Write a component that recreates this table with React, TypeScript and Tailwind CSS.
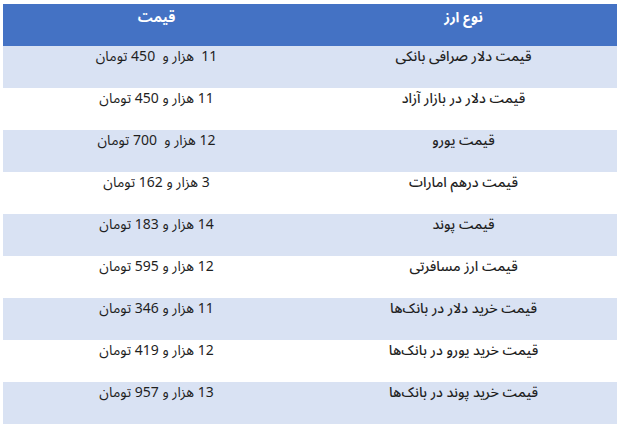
const rows: { name: string; price: string }[] = [
  { name: 'قیمت دلار صرافی بانکی', price: '11  هزار و  450 تومان' },
  { name: 'قیمت دلار در بازار آزاد', price: '11 هزار و 450 تومان' },
  { name: 'قیمت یورو', price: '12 هزار و  700 تومان' },
  { name: 'قیمت درهم امارات', price: '3 هزار و 162 تومان' },
  { name: 'قیمت پوند', price: '14 هزار و 183 تومان' },
  { name: 'قیمت ارز مسافرتی', price: '12 هزار و 595 تومان' },
  { name: 'قیمت خرید دلار در بانک‌ها', price: '11 هزار و 346 تومان' },
  { name: 'قیمت خرید یورو در بانک‌ها', price: '12 هزار و 419 تومان' },
  { name: 'قیمت خرید پوند در بانک‌ها', price: '13 هزار و 957 تومان' },
];

export default function App() {
  return (
    <div className="w-[621px] h-[427px] bg-white pt-[4px] pl-[3px] font-['Noto_Sans_Arabic','DejaVu_Sans',sans-serif]">
      <div dir="rtl" className="w-[614px] flex flex-col">
        {/* header */}
        <div className="h-[42px] bg-[#4472c4] grid grid-cols-2 text-white font-bold text-[14px] leading-[18px]">
          <div className="pt-[5px] text-center">نوع ارز</div>
          <div className="pt-[5px] text-center">قیمت</div>
        </div>
        {rows.map((r, i) => (
          <div
            key={r.name}
            className={`h-[42px] grid grid-cols-2 text-[#1f1f1f] text-[14px] leading-[18px] ${i % 2 === 0 ? 'bg-[#d9e2f3]' : 'bg-white'}`}
          >
            <div className="pt-[2px] text-center whitespace-pre font-medium">{r.name}</div>
            <div className="pt-[2px] text-center whitespace-pre">{r.price}</div>
          </div>
        ))}
      </div>
    </div>
  );
}
